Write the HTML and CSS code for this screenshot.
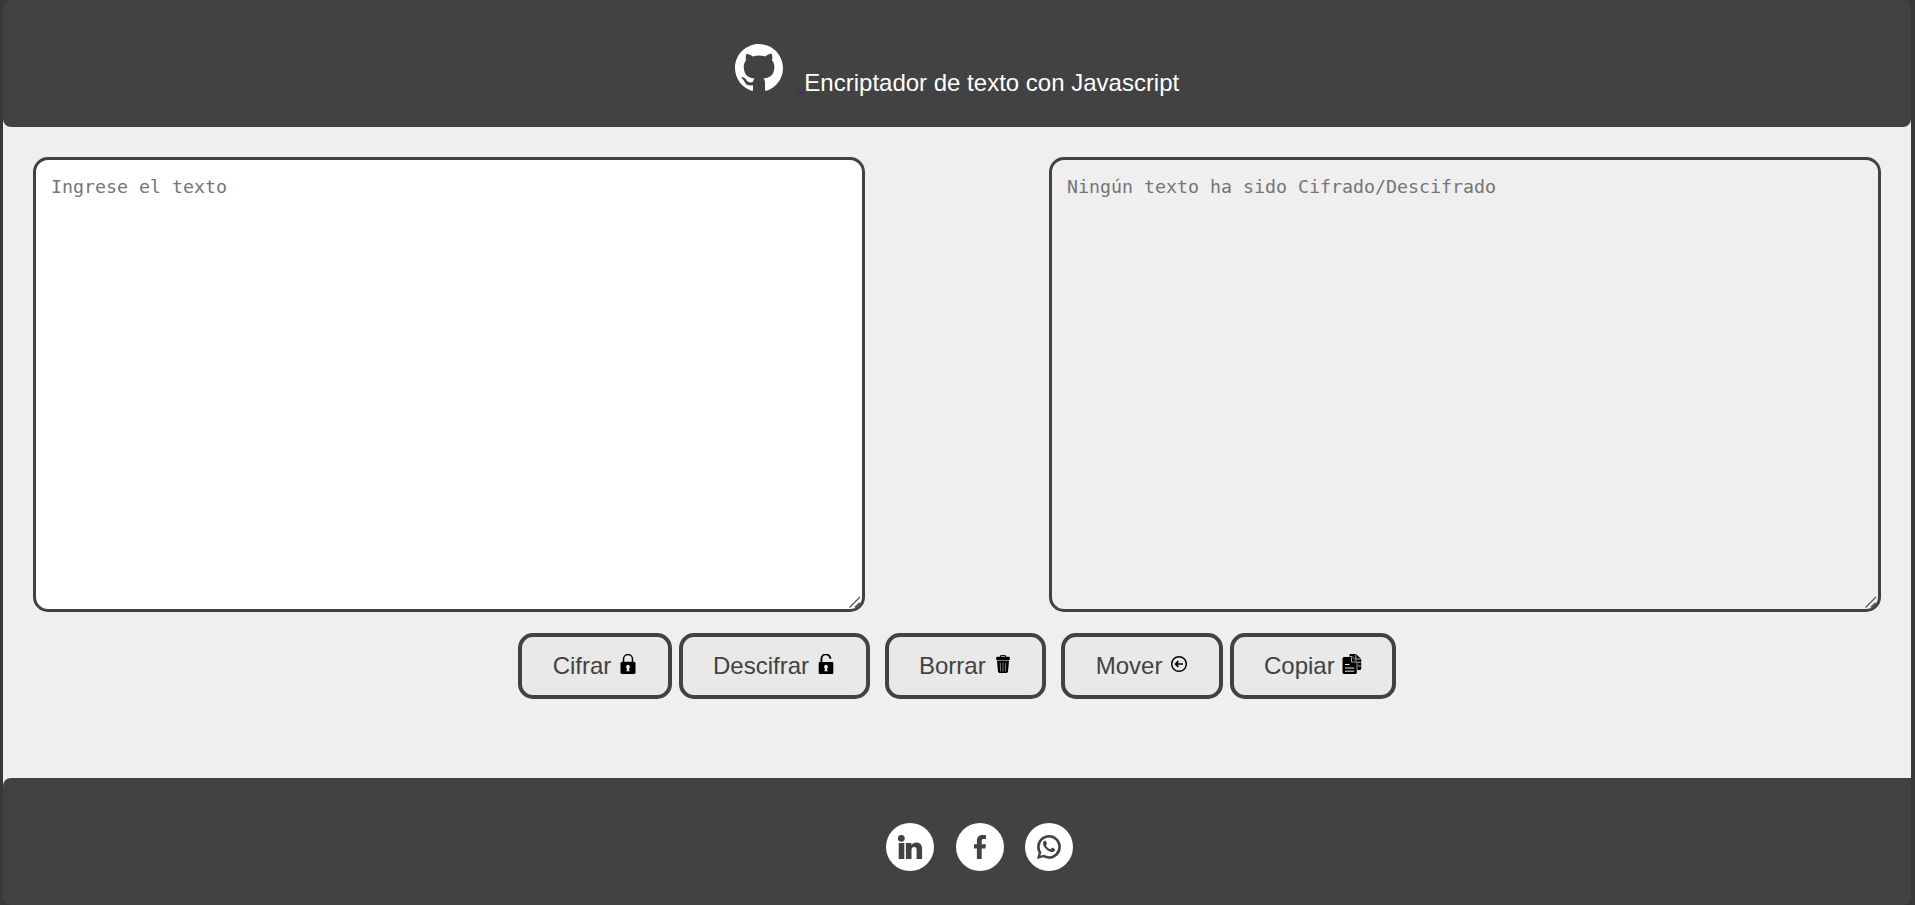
FILE: index.html
```html
<!DOCTYPE html>
<html lang="es">
<head>
<meta charset="utf-8">
<title>Encriptador de texto</title>
<link rel="stylesheet" href="styles.css">
</head>
<body>
<div class="page">
  <header class="header">
    <svg class="github" viewBox="0 0 16 16"><path fill="#fff" d="M8 0C3.58 0 0 3.58 0 8c0 3.54 2.29 6.53 5.47 7.59.4.07.55-.17.55-.38 0-.19-.01-.82-.01-1.49-2.01.37-2.53-.49-2.69-.94-.09-.23-.48-.94-.82-1.13-.28-.15-.68-.52-.01-.53.63-.01 1.08.58 1.23.82.72 1.21 1.87.87 2.33.66.07-.52.28-.87.51-1.07-1.78-.2-3.64-.89-3.64-3.95 0-.87.31-1.59.82-2.15-.08-.2-.36-1.02.08-2.12 0 0 .67-.21 2.2.82.64-.18 1.32-.27 2-.27s1.36.09 2 .27c1.53-1.04 2.2-.82 2.2-.82.44 1.1.16 1.92.08 2.12.51.56.82 1.27.82 2.15 0 3.07-1.87 3.75-3.65 3.95.29.25.54.73.54 1.48 0 1.07-.01 1.93-.01 2.2 0 .21.15.46.55.38A8.01 8.01 0 0 0 16 8c0-4.42-3.58-8-8-8z"/></svg>
    <a class="space-link">&nbsp;</a><span class="title">Encriptador de texto con Javascript</span>
  </header>
  <main class="main">
    <section class="areas">
      <div class="area-box">
        <textarea class="area" placeholder="Ingrese el texto" spellcheck="false"></textarea>
        <svg class="grip" viewBox="0 0 14 14"><path d="M.5 11.500L11 1" fill="none" stroke="#555" stroke-width="1.200"/><path d="M6 11.500l5-4.500" fill="none" stroke="#555" stroke-width="2"/></svg>
      </div>
      <div class="area-box">
        <textarea class="area output" placeholder="Ningún texto ha sido Cifrado/Descifrado" disabled></textarea>
        <svg class="grip" viewBox="0 0 14 14"><path d="M.5 11.500L11 1" fill="none" stroke="#555" stroke-width="1.200"/><path d="M6 11.500l5-4.500" fill="none" stroke="#555" stroke-width="2"/></svg>
      </div>
    </section>
    <section class="buttons">
      <button class="btn cifrar">Cifrar
        <svg class="icon" viewBox="0 0 20 20"><path d="M5.500 9V5.100a4.500 4.500 0 0 1 9 0V9" fill="none" stroke="#000" stroke-width="1.500"/><rect x="2.500" y="7.700" width="15" height="12.300" rx="1.500"/><path fill="#e9e9e9" d="M10 10.800a2 2 0 0 1 1.100 3.600l.4 2.800h-3l.4-2.800a2 2 0 0 1 1.100-3.600z"/></svg></button>
      <button class="btn descifrar">Descifrar
        <svg class="icon" viewBox="0 0 20 20"><path d="M5.400 9V5a4.500 4.500 0 0 1 9-.200" fill="none" stroke="#000" stroke-width="1.900"/><rect x="2.700" y="8" width="14.600" height="12" rx="1"/><path fill="#e9e9e9" d="M10 10.800a2 2 0 0 1 1.100 3.600l.4 2.800h-3l.4-2.800a2 2 0 0 1 1.100-3.600z"/></svg></button>
      <button class="btn borrar">Borrar
        <svg class="icon" viewBox="0 0 20 20"><path d="M7.600 3V1.600h4.800V3" fill="none" stroke="#000" stroke-width="1"/><rect x="3.200" y="2.800" width="13.600" height="3.400" rx=".9"/><path d="M4 6.800h12l-1 10.800a1.500 1.500 0 0 1-1.500 1.400h-7A1.500 1.500 0 0 1 5 17.600z"/><path d="M7.300 9l.3 8M10 9v8M12.700 9l-.3 8" fill="none" stroke="#b0b0b0" stroke-width=".7" stroke-linecap="round"/></svg></button>
      <button class="btn mover">Mover
        <svg class="icon" viewBox="0 0 20 20"><g fill="none" stroke="#000"><circle cx="10" cy="10" r="7.300" stroke-width="1.500"/><path d="M14 10H7M9.400 7.200L6.600 10l2.800 2.800" stroke-width="1.700"/></g></svg></button>
      <button class="btn copiar">Copiar
        <svg class="icon" viewBox="0 0 20 20"><path d="M7.500 0h6.500l5.200 5v9.500a1.500 1.500 0 0 1-1.500 1.500H7.500z"/><path d="M13.800.500V5h5M15.800 8.300h3M15.800 12h3" fill="none" stroke="#e9e9e9" stroke-width=".8"/><path d="M2 3h8l4.800 5v10.500a1.500 1.500 0 0 1-1.500 1.500H2a1.500 1.500 0 0 1-1.500-1.500v-14A1.500 1.500 0 0 1 2 3z"/><path d="M8 2.500h2.200l4.800 5.200V16M9.500 3.200V8h5" fill="none" stroke="#e9e9e9" stroke-width=".7"/><path d="M3 10.500h4.500M3 14h9.300M3 17.200h9.300" stroke="#e9e9e9" stroke-width="1"/></svg></button>
    </section>
  </main>
  <footer class="footer">
    <svg class="social" viewBox="0 0 48 48"><circle cx="24" cy="24" r="24" fill="#fff"/><g fill="#424242"><circle cx="15.300" cy="15.300" r="3.400"/><path d="M12.700 20h5.600V36h-5.600zM19.900 20h5.500v2.200c1-1.700 2.700-2.600 5-2.600 3.700 0 5.700 2.200 5.700 6.500V36h-5.500v-9c0-1.900-.800-2.900-2.400-2.900-1.700 0-2.700 1.200-2.700 3.200V36h-5.600z"/></g></svg>
    <svg class="social" viewBox="0 0 48 48"><circle cx="24" cy="24" r="24" fill="#fff"/><path fill="#424242" d="M20.900 36V25.400h-2.900v-4.200h2.900v-3.400c0-3.800 2.200-5.800 5.700-5.800 1.400 0 2.600.100 3.400.200v3.800h-2.200c-1.700 0-2.100.900-2.100 2.200v3H30l-.600 4.200h-3.700V36z"/></svg>
    <svg class="social" viewBox="0 0 48 48"><circle cx="24" cy="24" r="24" fill="#fff"/><path fill="#424242" transform="translate(12 12) scale(1.500)" d="M13.601 2.326A7.854 7.854 0 0 0 7.994 0C3.627 0 .068 3.558.064 7.926c0 1.399.366 2.760 1.057 3.965L0 16l4.204-1.102a7.933 7.933 0 0 0 3.790.965h.004c4.368 0 7.926-3.558 7.930-7.930A7.898 7.898 0 0 0 13.600 2.326zM7.994 14.100a6.200 6.200 0 0 1-3.250-.900l-2.500.650.660-2.430A6.150 6.150 0 0 1 1.800 7.926a6.200 6.200 0 1 1 6.194 6.174zm3.615-4.934c-.197-.099-1.170-.578-1.353-.646-.182-.065-.315-.099-.445.099-.133.197-.513.646-.627.775-.114.133-.232.148-.430.050-.197-.100-.836-.308-1.592-.985-.590-.525-.985-1.175-1.103-1.372-.114-.198-.011-.304.088-.403.087-.088.197-.232.296-.346.100-.114.133-.198.198-.330.065-.134.034-.248-.015-.347-.050-.099-.445-1.076-.612-1.470-.160-.389-.323-.335-.445-.340-.114-.007-.247-.007-.380-.007a.729.729 0 0 0-.529.247c-.182.198-.691.677-.691 1.654 0 .977.710 1.916.810 2.049.098.133 1.394 2.132 3.383 2.992.470.205.840.326 1.129.418.475.152.904.129 1.246.080.380-.058 1.171-.480 1.338-.943.164-.464.164-.860.114-.943-.049-.084-.182-.133-.380-.232z"/></svg>
  </footer>
</div>
</body>
</html>
```
FILE: styles.css
```css
* {
  box-sizing: border-box;
}

body {
  margin: 0;
  padding: 0 4px 0 3px;
  background: #383838;
  font-family: "Liberation Sans", Arial, sans-serif;
  overflow: hidden;
}

.page {
  height: 905px;
  display: flex;
  flex-direction: column;
  background: linear-gradient(#383838 0 20px, #efefef 20px 880px, #383838 880px);
}

.header {
  height: 127px;
  flex: none;
  display: flex;
  align-items: flex-start;
  padding: 43px 0 0 732px;
  background: #424242;
  border-radius: 8px;
  font-size: 24px;
  line-height: 28px;
}

.github {
  width: 48px;
  height: 48px;
  margin: 1px 14.700px 0 0;
}

.space-link {
  margin-top: 26px;
  color: #551a8b;
  text-decoration: underline;
  text-decoration-thickness: 2px;
}

.title {
  margin-top: 26px;
  color: #fff;
  white-space: nowrap;
}

.main {
  flex: 1;
  padding: 30px 30px 0;
}

.areas {
  display: flex;
  justify-content: space-between;
}

.area-box {
  position: relative;
  width: 832px;
  height: 455px;
}

.area {
  display: block;
  width: 100%;
  height: 100%;
  padding: 15px;
  border: 3px solid #424242;
  border-radius: 15px;
  background: #fff;
  font-family: "DejaVu Sans Mono", monospace;
  font-size: 18.270px;
  line-height: 23px;
  resize: none;
}

.area::placeholder {
  color: #757575;
}

.output {
  background: #efefef;
}

.grip {
  position: absolute;
  right: 2px;
  bottom: 2px;
  width: 14px;
  height: 14px;
}

.buttons {
  display: flex;
  margin: 21px 0 0 485px;
}

.btn {
  display: flex;
  height: 66px;
  padding: 15px 0 0 30px;
  border: 4px solid #424242;
  border-radius: 15px;
  background: #e9e9e9;
  color: #424242;
  font-family: inherit;
  font-size: 24px;
  line-height: 28px;
}

.icon {
  width: 20px;
  height: 20px;
  margin: 2px 0 0 7px;
}

.cifrar {
  width: 154px;
  margin-right: 7px;
  padding-left: 30.700px;
}

.descifrar {
  width: 191px;
  margin-right: 15px;
}

.borrar {
  width: 161px;
  margin-right: 15px;
}

.mover {
  width: 162px;
  margin-right: 7px;
  padding-left: 30.700px;
}

.copiar {
  width: 166px;
}

.footer {
  height: 127px;
  flex: none;
  display: flex;
  gap: 21.500px;
  padding: 45px 0 0 883px;
  background: #424242;
  border-radius: 8px 0 8px 8px;
}

.social {
  width: 48px;
  height: 48px;
}
```
